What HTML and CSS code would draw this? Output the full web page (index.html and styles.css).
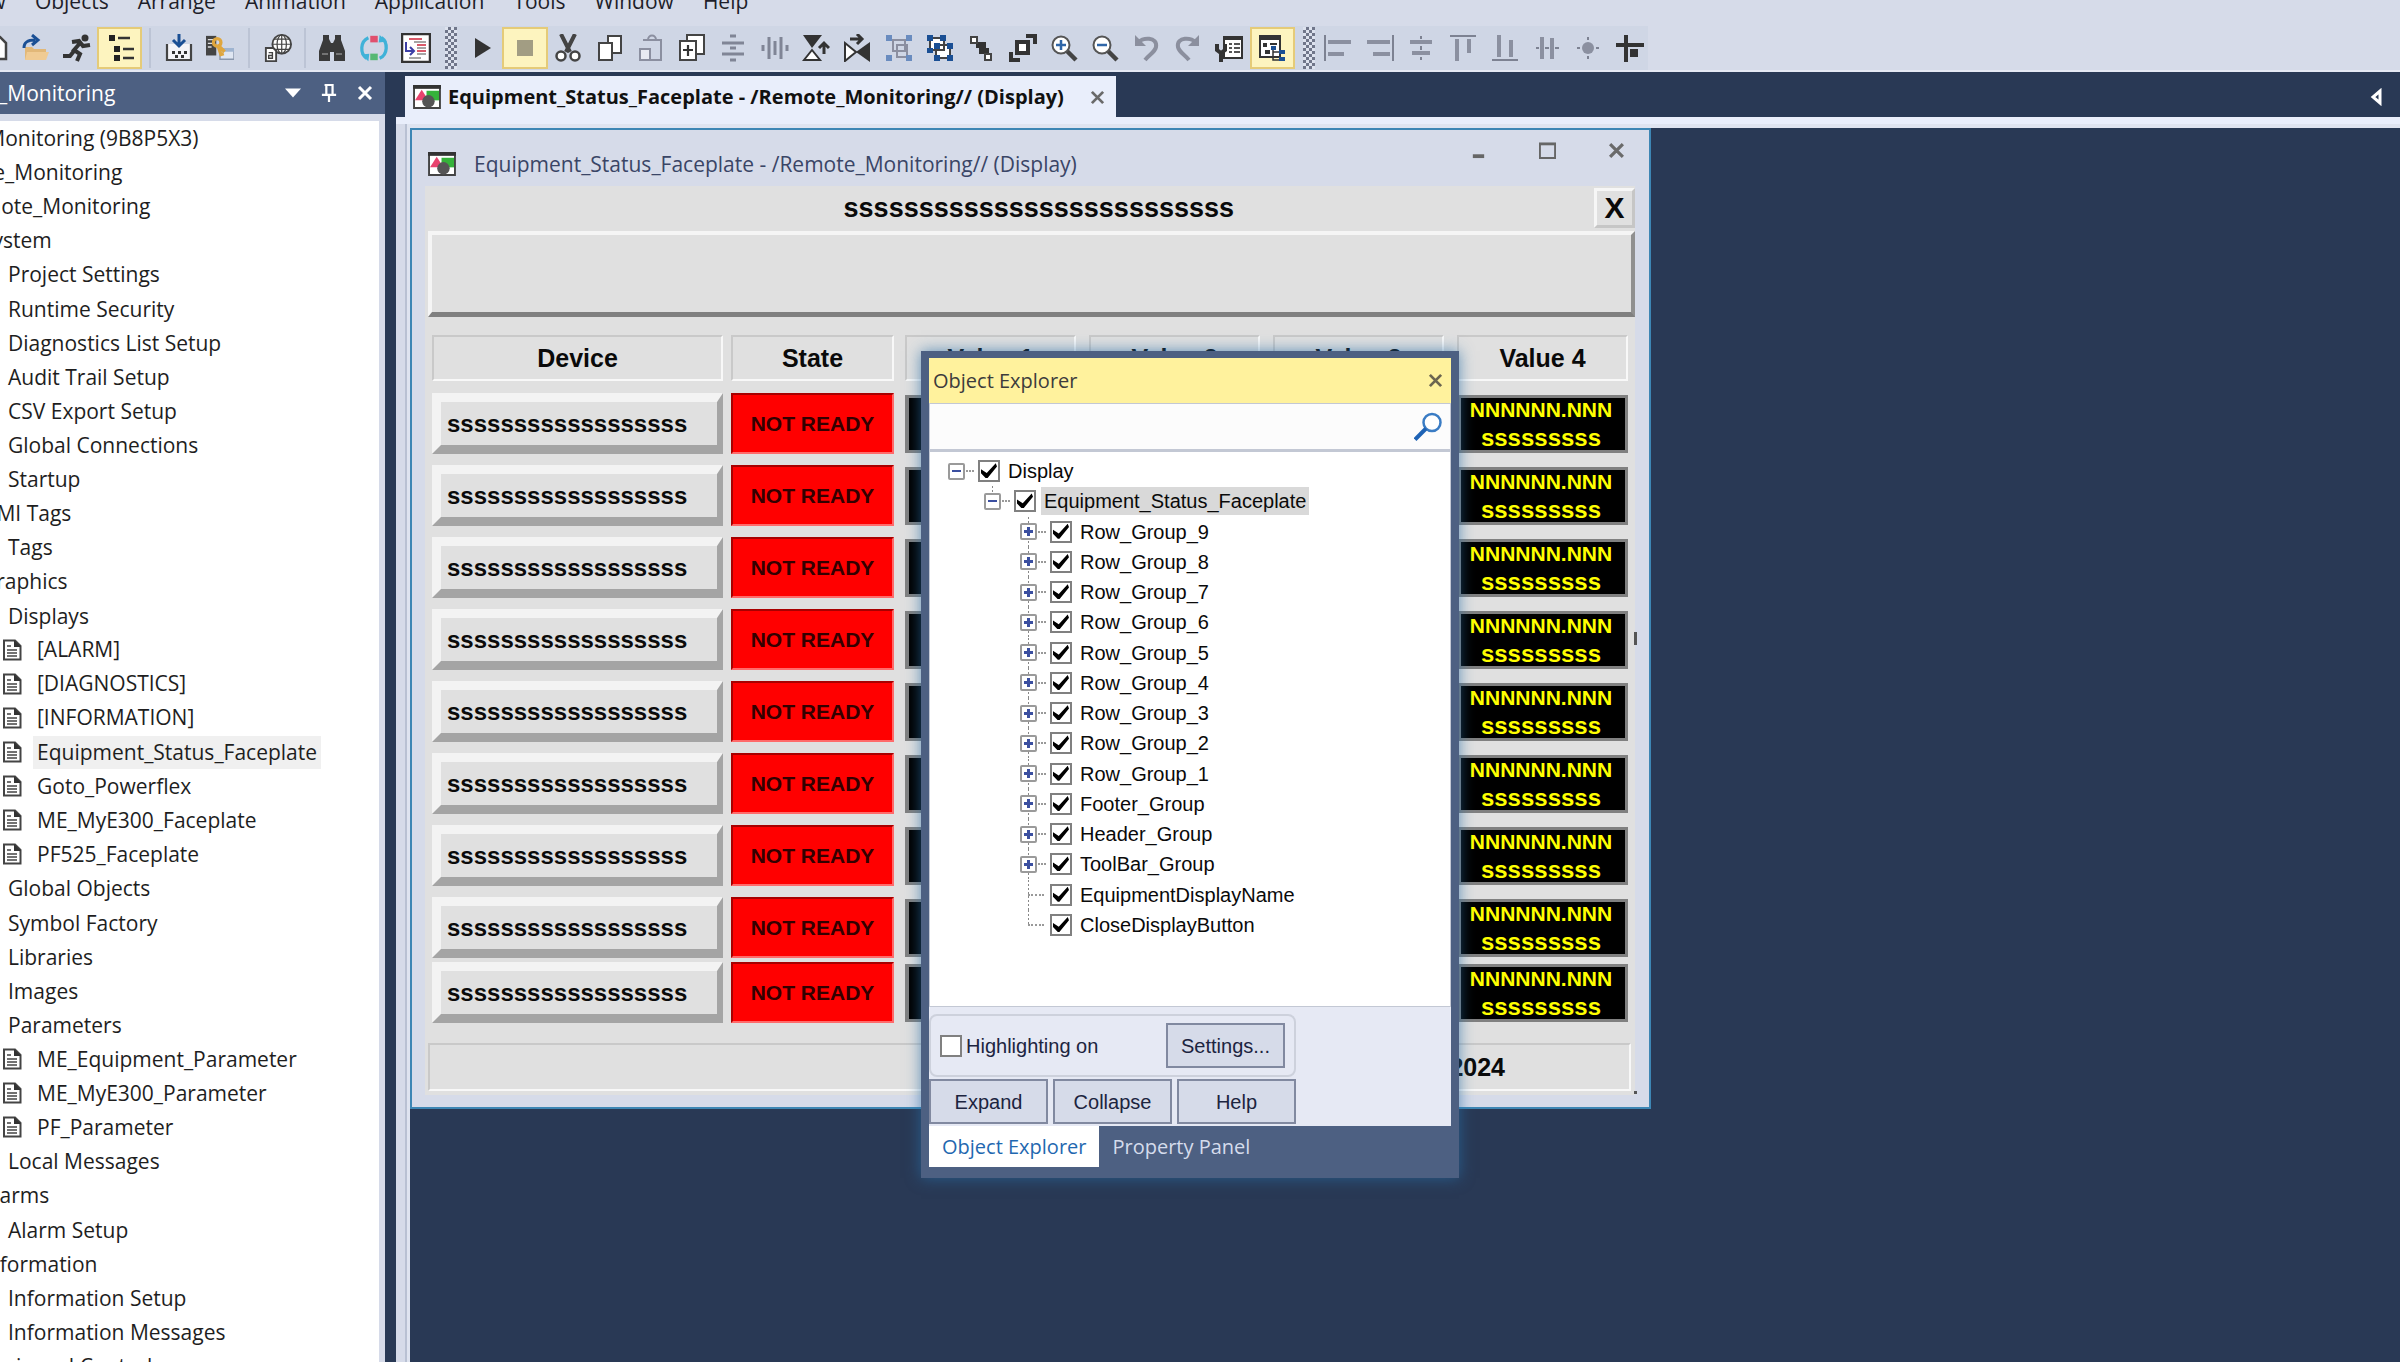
FILE: index.html
```html
<!DOCTYPE html>
<html lang="en">
<head>
<meta charset="utf-8">
<title>Remote_Monitoring</title>
<link rel="stylesheet" href="styles.css">
</head>
<body>
<svg class="defs" aria-hidden="true">
  <symbol id="page" viewBox="0 0 20 22"><path d="M2 1.5h11l5.500 5.500v13.500h-16.500z" fill="#fff" stroke="#444" stroke-width="2"/><path d="M12 1l7 7h-7z" fill="#333"/><path d="M5 7h4M5 11h10M5 14h10M5 17h10" stroke="#444" stroke-width="1.600"/></symbol>
  <symbol id="display" viewBox="0 0 29 25"><path d="M1 1h27v23h-27z" fill="#fff" stroke="#444" stroke-width="2"/><path d="M0 0h29v4h-29z" fill="#333"/><path d="M14 6h13v10h-13z" fill="#35b23a"/><path d="M2 16l7-11 7 11z" fill="#e8436e"/><circle cx="16" cy="17" r="6.500" fill="#555"/></symbol>
  <symbol id="cross" viewBox="0 0 16 16"><path d="M2 2l12 12M14 2L2 14" stroke="currentColor" stroke-width="3" fill="none"/></symbol>
</svg>

<nav class="menu">
  <a href="#">View</a><a href="#">Objects</a><a href="#">Arrange</a><a href="#">Animation</a><a href="#">Application</a><a href="#">Tools</a><a href="#">Window</a><a href="#">Help</a>
</nav>

<div class="toolbar">
  <div class="group g4 lead">
    <button aria-label="New"><svg viewBox="0 0 28 28"><path d="M5 3h14l6 6v16h-20z" fill="#fff" stroke="#444" stroke-width="2.500"/></svg></button>
    <button aria-label="Open"><svg viewBox="0 0 28 28"><path d="M3 13h7l2 2h12v11h-21z" fill="#e2b878"/><path d="M5 18h22l-3 8h-21z" fill="#f0cb93"/><path d="M2 14c0-7 5-8 11-8M10 1l6 5-6 5" fill="none" stroke="#1a4f94" stroke-width="3"/></svg></button>
    <button aria-label="Run application"><svg viewBox="0 0 28 28"><circle cx="22" cy="4" r="3.500" fill="#333"/><path d="M9 8l7-1 4 5 7-1M18 8l-7 8 6 4-3 7M11 17l-4 5H0" fill="none" stroke="#333" stroke-width="4"/></svg></button>
    <button class="on" aria-label="Explorer"><svg viewBox="0 0 28 28"><path d="M3 1h6v6H3zM8 12h6v6H8zM8 21h6v6H8z" fill="#222"/><path d="M12 4h12M17 15h11M17 24h11" stroke="#333" stroke-width="2.500"/></svg></button>
  </div>
  <i class="sep"></i>
  <div class="group g2">
    <button aria-label="Import"><svg viewBox="0 0 28 28"><path d="M2 10v16h24V10" fill="#f4f4f8" stroke="#444" stroke-width="2.200"/><path d="M7 17h3v3H7zM13 17h3v3h-3zM19 17h3v3h-3zM10 21h3v3h-3zM16 21h3v3h-3z" fill="#333"/><path d="M14 0v11M8 6l6 6 6-6" fill="none" stroke="#1a4f94" stroke-width="3"/></svg></button>
    <button aria-label="Database"><svg viewBox="0 0 30 28"><path d="M0 1h11v21H0z" fill="#444"/><path d="M2 5h7M2 9h7M2 13h4" stroke="#ddd" stroke-width="1.500"/><path d="M15 15h15v11H15z" fill="#dfe6f2" stroke="#8a97ad" stroke-width="1.500"/><path d="M15 14h15v4H15z" fill="#9fb4d0"/><circle cx="12" cy="8" r="4" fill="none" stroke="#dfa63e" stroke-width="3.500"/><path d="M13 12l3 9 3-1M14 12l6 6" fill="none" stroke="#dfa63e" stroke-width="3.500"/></svg></button>
  </div>
  <i class="sep"></i>
  <div class="group g1">
    <button aria-label="Language"><svg viewBox="0 0 30 30"><circle cx="19" cy="11" r="10" fill="#fff" stroke="#444" stroke-width="2"/><path d="M9 11h20M19 1v20M11 5.500h16M11 16.500h16" stroke="#444" stroke-width="1.300"/><ellipse cx="19" cy="11" rx="5" ry="10" fill="none" stroke="#444" stroke-width="1.300"/><path d="M2 15h8l3 3v11H2z" fill="#fff" stroke="#444" stroke-width="2"/><path d="M5 20h4v6H5v-3h4" fill="none" stroke="#444" stroke-width="1.500"/></svg></button>
  </div>
  <i class="sep"></i>
  <div class="group g3">
    <button aria-label="Find"><svg viewBox="0 0 28 28"><path d="M5 1h6v4l2 4h2l2-4V1h6v5l4 11v10H16v-9h-4v9H1V17L5 6z" fill="#3a3a3a"/><path d="M4 20h6M18 20h6" stroke="#888" stroke-width="1.500"/></svg></button>
    <button aria-label="Replace"><svg class="wide" viewBox="0 0 32 28"><path d="M10 3C1 7 1 20 8 25M22 25c9-4 9-17 2-22" fill="none" stroke="#3fb2d8" stroke-width="3.500"/><path d="M2 21l9-1-1 8zM30 7l-9 1 1-8z" fill="#3fb2d8"/><path d="M12 1h8v7h-8z" fill="#e0506e"/><path d="M12 20h8v7h-8z" fill="#56b873"/></svg></button>
    <button aria-label="Cross reference"><svg class="wide" viewBox="0 0 30 30"><path d="M1 1h28v28H1z" fill="#fff" stroke="#333" stroke-width="2.500"/><path d="M8 6h13M16 12h9M16 18h9" stroke="#d95a6a" stroke-width="2"/><path d="M13 9h12M16 15h9M16 21h9M8 25h12" stroke="#888" stroke-width="1.500"/><path d="M5 9v9h7M9 14l4 4-4 4" fill="none" stroke="#3c3fa6" stroke-width="2"/></svg></button>
  </div>
  <i class="grip"></i>
  <div class="group g20">
    <button aria-label="Test display"><svg viewBox="0 0 28 28"><path d="M7 4l16 10L7 24z" fill="#333"/></svg></button>
    <button class="on" aria-label="Stop"><svg viewBox="0 0 28 28"><path d="M6 6h16v16H6z" fill="#a29d83"/></svg></button>
    <button aria-label="Cut"><svg viewBox="0 0 28 28"><path d="M7 0l9 18M21 0l-9 18" stroke="#444" stroke-width="4"/><circle cx="7" cy="22" r="4.500" fill="#fff" stroke="#444" stroke-width="2.500"/><circle cx="21" cy="22" r="4.500" fill="#fff" stroke="#444" stroke-width="2.500"/></svg></button>
    <button aria-label="Copy"><svg viewBox="0 0 28 28"><path d="M12 2h13v17H12z" fill="#fff" stroke="#444" stroke-width="2"/><path d="M3 9h13v17H3z" fill="#fff" stroke="#444" stroke-width="2"/></svg></button>
    <button aria-label="Paste"><svg viewBox="0 0 28 28"><path d="M6 6h18v20H13M11 6c0-6 8-6 8 0" fill="none" stroke="#8b8fa0" stroke-width="2"/><path d="M3 15h10v11H3z" fill="#e8eaf2" stroke="#8b8fa0" stroke-width="2"/></svg></button>
    <button aria-label="Duplicate"><svg viewBox="0 0 28 28"><path d="M9 1h17v19H9z" fill="#fff" stroke="#444" stroke-width="2"/><path d="M2 7h16v19H2z" fill="#fff" stroke="#444" stroke-width="2"/><path d="M10 11v11M5 16h10" stroke="#333" stroke-width="2.200"/></svg></button>
    <button aria-label="Space vertically"><svg viewBox="0 0 28 28"><path d="M11 2h6M3 9h22M11 14h6M3 20h22M11 26h6" stroke="#808596" stroke-width="3"/></svg></button>
    <button aria-label="Space horizontally"><svg viewBox="0 0 28 28"><path d="M2 11v6M8 3v22M14 7v14M20 3v22M26 11v6" stroke="#808596" stroke-width="3"/></svg></button>
    <button aria-label="Flip vertical"><svg viewBox="0 0 28 28"><path d="M1 1h19L10 14z" fill="#333"/><path d="M10 16l8 10H2z" fill="#fff" stroke="#333" stroke-width="2"/><path d="M22 20V9M17 14l5-5 5 5" fill="none" stroke="#333" stroke-width="3"/></svg></button>
    <button aria-label="Flip horizontal"><svg viewBox="0 0 28 28"><path d="M2 9l11 9-11 9z" fill="#fff" stroke="#333" stroke-width="2"/><path d="M27 8v20L13 18z" fill="#333"/><path d="M7 5h11M14 0l5 5-5 5" fill="none" stroke="#333" stroke-width="3"/></svg></button>
    <button aria-label="Group"><svg viewBox="0 0 28 28"><path d="M8 6h12v11H8zM12 11h10v12H12z" fill="none" stroke="#8b8fa0" stroke-width="2"/><path d="M1 1h6v6H1zM21 1h6v6h-6zM1 21h6v6H1zM21 21h6v6h-6z" fill="#6a8cbf"/></svg></button>
    <button aria-label="Ungroup"><svg viewBox="0 0 28 28"><path d="M4 4h14v12H4zM10 11h14v13H10z" fill="#fff" stroke="#444" stroke-width="2"/><path d="M1 1h6v6H1zM14 1h6v6h-6zM1 14h6v5H1zM8 9h6v6H8zM21 9h6v6h-6zM8 21h6v6H8zM21 21h6v6h-6z" fill="#1a4f94"/></svg></button>
    <button aria-label="Send to back"><svg viewBox="0 0 28 28"><path d="M9 8h10v6h3v6H12v-6H9z" fill="#333"/><path d="M4 3h6v6H4zM18 20h6v6h-6z" fill="#fff" stroke="#444" stroke-width="2"/></svg></button>
    <button aria-label="Bring to front"><svg viewBox="0 0 28 28"><path d="M17 2h9v8M2 18v8h9" fill="none" stroke="#333" stroke-width="4"/><path d="M8 8h11v11H8z" fill="#fff" stroke="#333" stroke-width="4"/></svg></button>
    <button aria-label="Zoom in"><svg viewBox="0 0 28 28"><path d="M17 17l9 9" stroke="#444" stroke-width="4.500"/><circle cx="11" cy="11" r="8.500" fill="#fff" stroke="#555" stroke-width="2"/><path d="M6 11h10M11 6v10" stroke="#2f66a8" stroke-width="2.500"/></svg></button>
    <button aria-label="Zoom out"><svg viewBox="0 0 28 28"><path d="M17 17l9 9" stroke="#444" stroke-width="4.500"/><circle cx="11" cy="11" r="8.500" fill="#fff" stroke="#555" stroke-width="2"/><path d="M6 11h10" stroke="#2f66a8" stroke-width="2.500"/></svg></button>
    <button aria-label="Undo"><svg viewBox="0 0 28 28"><path d="M5 10c5-8 21-7 19 3-1 5-6 7-11 13" fill="none" stroke="#8b8f9e" stroke-width="4"/><path d="M3 1v11h11z" fill="#8b8f9e"/></svg></button>
    <button aria-label="Redo"><svg viewBox="0 0 28 28"><path d="M23 10C18 2 2 3 4 13c1 5 6 7 11 13" fill="none" stroke="#8b8f9e" stroke-width="4"/><path d="M25 1v11H14z" fill="#8b8f9e"/></svg></button>
    <button aria-label="Properties"><svg viewBox="0 0 28 28"><path d="M9 4h18v20H9z" fill="#fff" stroke="#333" stroke-width="2"/><path d="M8 2h20v4H8z" fill="#333"/><path d="M14 10h3M19 10h6M14 14h3M19 14h6M14 18h3M19 18h6" stroke="#555" stroke-width="2"/><path d="M2 10v6l4 3 4-3v-6M6 18v10" fill="none" stroke="#333" stroke-width="4"/></svg></button>
    <button class="on" aria-label="Object explorer"><svg viewBox="0 0 28 28"><path d="M2 3h20v20H2z" fill="#fff" stroke="#333" stroke-width="2"/><path d="M1 1h22v5H1z" fill="#333"/><path d="M5 9h4v4H5zM7 16h5v4H7zM12 9h7v2h-7z" fill="#333"/><path d="M15 14v12h7M15 18h7" fill="none" stroke="#333" stroke-width="1.500"/><path d="M13 12h5v4h-5zM21 16h6v4h-6zM21 23h6v4h-6z" fill="#1a4f94"/></svg></button>
  </div>
  <i class="grip"></i>
  <div class="group g8">
    <button aria-label="Align left"><svg viewBox="0 0 28 28"><path d="M1 1v26" stroke="#7d8292" stroke-width="2"/><path d="M4 8h23M4 20h16" stroke="#8b90a0" stroke-width="4"/></svg></button>
    <button aria-label="Align right"><svg viewBox="0 0 28 28"><path d="M27 1v26" stroke="#7d8292" stroke-width="2"/><path d="M1 8h23M7 20h17" stroke="#8b90a0" stroke-width="4"/></svg></button>
    <button aria-label="Align center"><svg viewBox="0 0 28 28"><path d="M14 2v3M14 12v4M14 23v3" stroke="#7d8292" stroke-width="2"/><path d="M3 8h22M5 19h18" stroke="#8b90a0" stroke-width="4"/></svg></button>
    <button aria-label="Align top"><svg viewBox="0 0 28 28"><path d="M1 2h26" stroke="#7d8292" stroke-width="2"/><path d="M8 5v22M20 5v14" stroke="#8b90a0" stroke-width="4"/></svg></button>
    <button aria-label="Align bottom"><svg viewBox="0 0 28 28"><path d="M1 26h26" stroke="#7d8292" stroke-width="2"/><path d="M8 1v22M20 6v17" stroke="#8b90a0" stroke-width="4"/></svg></button>
    <button aria-label="Align middle"><svg viewBox="0 0 28 28"><path d="M3 14h3M12 14h4M22 14h4" stroke="#7d8292" stroke-width="2"/><path d="M9 3v22M19 4v21" stroke="#8b90a0" stroke-width="4"/></svg></button>
    <button aria-label="Center points"><svg viewBox="0 0 28 28"><circle cx="14" cy="14" r="6" fill="#8b90a0"/><path d="M14 3v3M14 22v3M3 14h3M22 14h3" stroke="#7d8292" stroke-width="2"/></svg></button>
    <button aria-label="Grid"><svg viewBox="0 0 28 28"><path d="M0 11h28M10 1v27" stroke="#333" stroke-width="4"/><path d="M14 15h8v8h-8z" fill="#333"/></svg></button>
  </div>
</div>

<div class="workspace">
  <aside class="sidebar">
    <header class="side-head">
      <h2>Remote_Monitoring</h2>
      <button aria-label="Menu"><svg viewBox="0 0 18 12"><path d="M0 1h18L9 11z" fill="#fff"/></svg></button>
      <button aria-label="Pin"><svg viewBox="0 0 18 20"><path d="M4 1h9v10M6 1v10M1 12h16M9 12v8" fill="none" stroke="#fff" stroke-width="2.500"/></svg></button>
      <button aria-label="Close"><svg viewBox="0 0 16 16"><use href="#cross"/></svg></button>
    </header>
    <div class="side-body">
      <ul class="project">
        <li class="l0">Remote_Monitoring (9B8P5X3)</li>
        <li class="l1">Remote_Monitoring</li>
        <li class="l2">Remote_Monitoring</li>
        <li class="l3">System</li>
        <li class="l4">Project Settings</li>
        <li class="l4">Runtime Security</li>
        <li class="l4">Diagnostics List Setup</li>
        <li class="l4">Audit Trail Setup</li>
        <li class="l4">CSV Export Setup</li>
        <li class="l4">Global Connections</li>
        <li class="l4">Startup</li>
        <li class="l3">HMI Tags</li>
        <li class="l4">Tags</li>
        <li class="l3">Graphics</li>
        <li class="l4">Displays</li>
        <li class="doc"><svg><use href="#page"/></svg><span>[ALARM]</span></li>
        <li class="doc"><svg><use href="#page"/></svg><span>[DIAGNOSTICS]</span></li>
        <li class="doc"><svg><use href="#page"/></svg><span>[INFORMATION]</span></li>
        <li class="doc"><svg><use href="#page"/></svg><span class="current">Equipment_Status_Faceplate</span></li>
        <li class="doc"><svg><use href="#page"/></svg><span>Goto_Powerflex</span></li>
        <li class="doc"><svg><use href="#page"/></svg><span>ME_MyE300_Faceplate</span></li>
        <li class="doc"><svg><use href="#page"/></svg><span>PF525_Faceplate</span></li>
        <li class="l4">Global Objects</li>
        <li class="l4">Symbol Factory</li>
        <li class="l4">Libraries</li>
        <li class="l4">Images</li>
        <li class="l4">Parameters</li>
        <li class="doc"><svg><use href="#page"/></svg><span>ME_Equipment_Parameter</span></li>
        <li class="doc"><svg><use href="#page"/></svg><span>ME_MyE300_Parameter</span></li>
        <li class="doc"><svg><use href="#page"/></svg><span>PF_Parameter</span></li>
        <li class="l4">Local Messages</li>
        <li class="l3">Alarms</li>
        <li class="l4">Alarm Setup</li>
        <li class="l3">Information</li>
        <li class="l4">Information Setup</li>
        <li class="l4">Information Messages</li>
        <li class="l3">Logic and Control</li>
      </ul>
    </div>
  </aside>

  <main class="docs">
    <div class="tabstrip">
      <div class="tab">
        <svg class="dicon"><use href="#display"/></svg>
        <span>Equipment_Status_Faceplate - /Remote_Monitoring// (Display)</span>
        <button aria-label="Close tab"><svg viewBox="0 0 16 16"><use href="#cross"/></svg></button>
      </div>
      <button class="scroll" aria-label="Scroll tabs"><svg viewBox="0 0 12 18"><path d="M10 3v12L3 9z" fill="#293955" stroke="#fff" stroke-width="3"/></svg></button>
    </div>
    <div class="frame">
      <div class="canvas">
        <section class="window">
          <header class="win-head">
            <svg class="dicon"><use href="#display"/></svg>
            <h1>Equipment_Status_Faceplate - /Remote_Monitoring// (Display)</h1>
            <button aria-label="Minimize"><svg viewBox="0 0 18 18"><path d="M3 15h12" stroke="#666" stroke-width="4"/></svg></button>
            <button aria-label="Maximize"><svg viewBox="0 0 18 18"><path d="M1 2h16v15H1z" fill="none" stroke="#666" stroke-width="2"/><path d="M0 2h18" stroke="#666" stroke-width="3"/></svg></button>
            <button aria-label="Close window"><svg viewBox="0 0 16 16"><use href="#cross"/></svg></button>
          </header>
          <div class="faceplate">
            <div class="title-row">
              <span>ssssssssssssssssssssssssss</span>
              <button class="close-display">X</button>
            </div>
            <div class="raised"></div>
            <table>
              <thead><tr><th>Device</th><th>State</th><th>Value 1</th><th>Value 2</th><th>Value 3</th><th>Value 4</th></tr></thead>
              <tbody>
                <tr><td><button class="device">ssssssssssssssssss</button></td><td class="state">NOT READY</td><td class="val"></td><td class="val"></td><td class="val"></td><td class="val"><b>NNNNNN.NNN</b><span>sssssssss</span></td></tr>
                <tr><td><button class="device">ssssssssssssssssss</button></td><td class="state">NOT READY</td><td class="val"></td><td class="val"></td><td class="val"></td><td class="val"><b>NNNNNN.NNN</b><span>sssssssss</span></td></tr>
                <tr><td><button class="device">ssssssssssssssssss</button></td><td class="state">NOT READY</td><td class="val"></td><td class="val"></td><td class="val"></td><td class="val"><b>NNNNNN.NNN</b><span>sssssssss</span></td></tr>
                <tr><td><button class="device">ssssssssssssssssss</button></td><td class="state">NOT READY</td><td class="val"></td><td class="val"></td><td class="val"></td><td class="val"><b>NNNNNN.NNN</b><span>sssssssss</span></td></tr>
                <tr><td><button class="device">ssssssssssssssssss</button></td><td class="state">NOT READY</td><td class="val"></td><td class="val"></td><td class="val"></td><td class="val"><b>NNNNNN.NNN</b><span>sssssssss</span></td></tr>
                <tr><td><button class="device">ssssssssssssssssss</button></td><td class="state">NOT READY</td><td class="val"></td><td class="val"></td><td class="val"></td><td class="val"><b>NNNNNN.NNN</b><span>sssssssss</span></td></tr>
                <tr><td><button class="device">ssssssssssssssssss</button></td><td class="state">NOT READY</td><td class="val"></td><td class="val"></td><td class="val"></td><td class="val"><b>NNNNNN.NNN</b><span>sssssssss</span></td></tr>
                <tr><td><button class="device">ssssssssssssssssss</button></td><td class="state">NOT READY</td><td class="val"></td><td class="val"></td><td class="val"></td><td class="val"><b>NNNNNN.NNN</b><span>sssssssss</span></td></tr>
                <tr><td><button class="device">ssssssssssssssssss</button></td><td class="state">NOT READY</td><td class="val"></td><td class="val"></td><td class="val"></td><td class="val"><b>NNNNNN.NNN</b><span>sssssssss</span></td></tr>
              </tbody>
            </table>
            <footer class="sunken">2024</footer>
            <i class="handle side"></i><i class="handle corner"></i>
          </div>
        </section>

        <section class="explorer">
          <header class="exp-head"><h2>Object Explorer</h2><button aria-label="Close explorer"><svg viewBox="0 0 16 16"><use href="#cross"/></svg></button></header>
          <div class="search">
            <input type="text" aria-label="Search objects">
            <button aria-label="Search"><svg viewBox="0 0 28 28"><circle cx="18" cy="10" r="8.500" fill="#fff" stroke="#3a7cc4" stroke-width="2.500"/><path d="M12 16L1 27" stroke="#1f63b5" stroke-width="4"/></svg></button>
          </div>
          <ul class="objects">
            <li class="t0"><button class="ex" aria-label="Collapse"></button><input type="checkbox" id="c1" checked><label for="c1">Display</label></li>
            <li class="t1"><button class="ex" aria-label="Collapse"></button><input type="checkbox" id="c2" checked><label for="c2" class="current">Equipment_Status_Faceplate</label></li>
            <li class="t2"><button class="ex plus" aria-label="Expand"></button><input type="checkbox" id="c3" checked><label for="c3">Row_Group_9</label></li>
            <li class="t2"><button class="ex plus" aria-label="Expand"></button><input type="checkbox" id="c4" checked><label for="c4">Row_Group_8</label></li>
            <li class="t2"><button class="ex plus" aria-label="Expand"></button><input type="checkbox" id="c5" checked><label for="c5">Row_Group_7</label></li>
            <li class="t2"><button class="ex plus" aria-label="Expand"></button><input type="checkbox" id="c6" checked><label for="c6">Row_Group_6</label></li>
            <li class="t2"><button class="ex plus" aria-label="Expand"></button><input type="checkbox" id="c7" checked><label for="c7">Row_Group_5</label></li>
            <li class="t2"><button class="ex plus" aria-label="Expand"></button><input type="checkbox" id="c8" checked><label for="c8">Row_Group_4</label></li>
            <li class="t2"><button class="ex plus" aria-label="Expand"></button><input type="checkbox" id="c9" checked><label for="c9">Row_Group_3</label></li>
            <li class="t2"><button class="ex plus" aria-label="Expand"></button><input type="checkbox" id="c10" checked><label for="c10">Row_Group_2</label></li>
            <li class="t2"><button class="ex plus" aria-label="Expand"></button><input type="checkbox" id="c11" checked><label for="c11">Row_Group_1</label></li>
            <li class="t2"><button class="ex plus" aria-label="Expand"></button><input type="checkbox" id="c12" checked><label for="c12">Footer_Group</label></li>
            <li class="t2"><button class="ex plus" aria-label="Expand"></button><input type="checkbox" id="c13" checked><label for="c13">Header_Group</label></li>
            <li class="t2"><button class="ex plus" aria-label="Expand"></button><input type="checkbox" id="c14" checked><label for="c14">ToolBar_Group</label></li>
            <li class="t2 leaf"><input type="checkbox" id="c15" checked><label for="c15">EquipmentDisplayName</label></li>
            <li class="t2 leaf last"><input type="checkbox" id="c16" checked><label for="c16">CloseDisplayButton</label></li>
          </ul>
          <div class="controls">
            <div class="box"><input type="checkbox" id="hl"><label for="hl">Highlighting on</label><button>Settings...</button></div>
            <div class="btns"><button>Expand</button><button>Collapse</button><button>Help</button></div>
          </div>
          <div class="tabs"><button class="active">Object Explorer</button><button>Property Panel</button></div>
        </section>
      </div>
    </div>
  </main>
</div>
</body>
</html>
```
FILE: styles.css
```css
* { box-sizing: border-box; }
html, body { height: 100%; }
body {
  margin: 0;
  display: flex;
  flex-direction: column;
  overflow: hidden;
  background: #d6dbe9;
  color: #1e1e1e;
  font: 21px/28px "Open Sans", "Noto Sans", sans-serif;
  white-space: nowrap;
}
button { margin: 0; padding: 0; border: 0; background: none; color: inherit; font: inherit; }
h1, h2 { margin: 0; font: inherit; }
ul { margin: 0; padding: 0; list-style: none; }
svg { display: block; }
.defs { position: absolute; width: 0; height: 0; }

/* menu and toolbar */
.menu {
  flex: none;
  display: flex;
  align-items: flex-end;
  gap: 29px;
  height: 26px;
  margin-left: -40px;
  padding-bottom: 11px;
  overflow: hidden;
}
.menu a { color: #1e1e2a; text-decoration: none; }
.toolbar {
  flex: none;
  display: flex;
  align-items: center;
  height: 46px;
  border-bottom: 2px solid #e4e8f3;
  background: linear-gradient(90deg, #cfd6e5 1648px, #d6dbe9 1648px);
}
.group { flex: none; display: flex; }
.group button {
  flex: 1;
  display: flex;
  align-items: center;
  justify-content: center;
  height: 42px;
}
.group svg { flex: none; width: 28px; height: 28px; }
.group .wide { width: 30px; height: 30px; }
.group .on { border: 2px solid #e5cb78; background: #fdf4bf; }
.lead { margin-left: -25px; }
.g4 { width: 167px; }
.g2 { width: 83px; }
.g1 { width: 42px; }
.g3 { width: 126px; }
.g20 { width: 834px; }
.g8 { width: 334px; }
.sep { flex: none; width: 2px; height: 40px; margin: 0 7px; background: #bcc4d5; }
.g1 + .sep { margin: 0 5px; }
.grip {
  flex: none;
  width: 12px;
  height: 42px;
  margin: 0 4px 0 8px;
  background: conic-gradient(#70768a 25%, #dde2ee 0 50%, #70768a 0 75%, #dde2ee 0) 0 0 / 6px 6px;
}
.g20 + .grip { margin: 0 2px 0 8px; }

/* workspace */
.workspace { flex: 1; min-height: 0; display: flex; background: #293955; }
.sidebar { flex: none; display: flex; flex-direction: column; width: 385px; overflow: hidden; background: #d6dbe9; }
.side-head {
  flex: none;
  display: flex;
  align-items: center;
  gap: 20px;
  height: 42px;
  margin-bottom: 7px;
  padding-right: 12px;
  background: #4d6082;
  color: #fff;
}
.side-head h2 { flex: 1; margin-left: -78px; }
.side-head svg { width: 16px; height: 18px; }
.side-body { flex: 1; min-height: 0; width: 379px; overflow: hidden; background: #fff; }
.project { display: flex; flex-direction: column; height: 1262px; margin-left: -105px; }
.project li { flex: 1; display: flex; align-items: center; }
.l0 { padding-left: 6px; }
.l1 { padding-left: 34px; }
.l2 { padding-left: 62px; }
.l3 { padding-left: 86px; }
.l4 { padding-left: 113px; }
.doc { padding-left: 107px; }
.doc svg { width: 20px; height: 22px; margin-right: 11px; }
.doc span { padding: 0 4px; line-height: 33px; }
.doc .current { background: #f0f0f0; }

.docs { flex: 1; min-width: 0; display: flex; flex-direction: column; margin-left: 11px; }
.tabstrip {
  flex: none;
  display: flex;
  justify-content: space-between;
  height: 46px;
  padding: 4px 18px 0 9px;
  border-bottom: 1px solid #7f8ba4;
}
.tab { display: flex; align-items: center; height: 42px; padding: 0 11px 0 8px; background: #e9eefb; color: #111; font-size: 20px; font-weight: 700; }
.tab span { margin: 0 26px 0 7px; }
.dicon { flex: none; width: 28px; height: 24px; }
.tab button { color: #6a6a6a; }
.tab button svg { width: 15px; height: 15px; }
.scroll svg { width: 12px; height: 18px; }
.frame {
  flex: 1;
  min-height: 0;
  margin-top: -1px;
  padding: 4px 0 0 14px;
  border-top: 7px solid #e9eefb;
  background: linear-gradient(90deg, #d6dbe9 9px, #b9c1d3 9px 11px, #dfe4f0 11px);
}
.canvas { position: relative; height: 100%; background: #293955; }

/* display window on the canvas */
.window {
  position: absolute;
  left: 0;
  top: 0;
  width: 1241px;
  padding: 0 14px 12px 13px;
  border: 2px solid #3d86b4;
  background: #d6dbe9;
}
.win-head { display: flex; align-items: center; height: 56px; padding: 12px 9px 0 3px; color: #3a4566; }
.win-head h1 { flex: 1; margin-left: 18px; }
.win-head button { width: 18px; height: 18px; margin: 0 0 28px 51px; color: #6a6a6a; }
.win-head button svg { width: 17px; height: 17px; }
.faceplate {
  position: relative;
  padding: 1px 0 4px 3px;
  background: #e0e0e0;
  color: #0a0a0a;
  font-family: "Liberation Sans", Arial, sans-serif;
  font-weight: 700;
}
.title-row { display: flex; justify-content: flex-end; align-items: center; height: 41px; margin-bottom: 3px; font-size: 27px; }
.title-row span { margin-right: 360px; }
.close-display { width: 41px; height: 40px; border: 3px solid #f6f6f6; border-right-color: #c6c6c6; border-bottom-color: #c6c6c6; font-size: 30px; }
.raised { height: 86px; border: 4px solid #f5f5f5; border-bottom: 5px solid #808080; border-right-color: #909090; }
.faceplate table { display: block; margin: 18px 0 20px 4px; }
.faceplate thead, .faceplate tbody { display: block; }
.faceplate tr { display: grid; grid-template-columns: 299px 174px 184px 184px 184px 171px; height: 61px; margin-bottom: 11px; }
.faceplate thead tr { height: 44px; margin-bottom: 14px; }
.faceplate tbody tr:nth-last-child(2) { margin-bottom: 4px; }
.faceplate tbody tr:last-child { margin-bottom: 0; }
.faceplate th { margin-right: 13px; padding: 0; border: 2px solid #c9c9c9; border-right-color: #f8f8f8; border-bottom-color: #f8f8f8; font-size: 25px; line-height: 42px; }
.faceplate th:first-child { margin-right: 8px; }
.faceplate th:nth-child(2) { margin-right: 11px; }
.faceplate th:last-child, .faceplate td:last-child { margin-right: 0; }
.faceplate td { padding: 0; }
.device {
  display: block;
  width: 291px;
  height: 61px;
  padding: 0 18px 0 6px;
  border: 9px solid #f3f3f3;
  border-right: 6px solid #a4a4a4;
  border-bottom-color: #a4a4a4;
  text-align: left;
  font-size: 24px;
}
.faceplate .state {
  margin-right: 11px;
  border: 2px solid #a80000;
  border-right-color: #ff6a6a;
  border-bottom-color: #ff6a6a;
  background: #f00;
  color: #330000;
  font-size: 21px;
  line-height: 57px;
  text-align: center;
}
.faceplate .val {
  display: flex;
  flex-direction: column;
  align-items: center;
  justify-content: center;
  height: 58px;
  margin: 2px 13px 0 0;
  padding-right: 4px;
  border: 3px solid #808080;
  border-left-width: 4px;
  background: #000;
  color: #ff0;
  font-size: 24px;
  line-height: 28px;
}
.val b { font-size: 21px; }
.sunken {
  height: 48px;
  margin-right: 4px;
  padding-right: 124px;
  border: 2px solid #c9c9c9;
  border-right-color: #f8f8f8;
  border-bottom-color: #f8f8f8;
  font-size: 25px;
  line-height: 44px;
  text-align: right;
}
.handle { position: absolute; right: -2px; width: 3px; background: #555; }
.side { top: 446px; height: 13px; }
.corner { bottom: 1px; height: 3px; }

/* floating object explorer */
.explorer {
  position: absolute;
  left: 511px;
  top: 223px;
  width: 538px;
  padding: 7px 8px 11px;
  background: #4d6082;
  box-shadow: 0 0 14px rgba(40, 110, 165, 0.7);
}
.exp-head { display: flex; align-items: center; justify-content: space-between; height: 45px; padding: 0 8px 0 4px; background: #fff29d; color: #3c3c3c; font-size: 20px; }
.exp-head svg { width: 15px; height: 15px; color: #6c6650; }
.search { display: flex; align-items: center; height: 49px; padding: 0 8px 0 2px; border: 1px solid #c3c8d4; border-bottom-width: 3px; background: #fcfcfc; }
.search input { flex: 1; height: 40px; border: 0; outline: 0; background: none; font: inherit; }
.search svg { width: 28px; height: 29px; }
.objects {
  display: flex;
  flex-direction: column;
  height: 555px;
  padding: 4px 0 66px;
  border: 1px solid #c3c8d4;
  border-top: 0;
  background: #fff;
  color: #0a0a0a;
  font: 20px/28px "Liberation Sans", Arial, sans-serif;
}
.objects li { flex: 1; display: flex; align-items: center; }
.t0 { padding-left: 18px; }
.t1 { padding-left: 54px; background: repeating-linear-gradient(#888 0 2px, #fff 2px 4px) 62px 0 / 1px 50% no-repeat; }
.t2 { padding-left: 90px; background: repeating-linear-gradient(#888 0 2px, #fff 2px 4px) 98px 0 / 1px 100% no-repeat; }
.ex {
  width: 17px;
  height: 17px;
  margin-right: 13px;
  border: 2px solid #9a9a9a;
  border-radius: 2px;
  background: linear-gradient(#3b4fa0, #3b4fa0) center / 9px 2px no-repeat, #fff;
}
.plus {
  background: linear-gradient(#3b4fa0, #3b4fa0) center / 9px 3px no-repeat,
    linear-gradient(#3b4fa0, #3b4fa0) center / 3px 9px no-repeat, #fff;
}
.ex::after { content: ""; display: block; width: 8px; margin-left: 16px; border-top: 2px dotted #999; }
.leaf::before { content: ""; width: 16px; margin: 0 6px 0 8px; border-top: 2px dotted #999; }
.last { background-size: 1px 50%; }
input[type="checkbox"] {
  appearance: none;
  display: grid;
  width: 22px;
  height: 22px;
  margin: 0;
  border: 2px solid #808080;
  background: #fff;
}
input[type="checkbox"]:checked::before {
  content: "";
  width: 16px;
  height: 15px;
  margin: 1px;
  background: #000;
  clip-path: polygon(0 40%, 36% 66%, 92% 0, 100% 22%, 40% 100%, 30% 100%, 0 68%);
}
.objects label { margin-left: 5px; padding: 0 3px; }
.objects .current { background: #d9d9d9; }
.controls { padding: 7px 0 2px 0; background: #e6e9f4; color: #1c2440; font: 20px/28px "Liberation Sans", Arial, sans-serif; }
.controls .box { display: flex; align-items: center; width: 367px; height: 63px; margin-bottom: 2px; padding: 0 9px 0 9px; border: 2px solid #cdd1dc; border-radius: 8px; }
.box label { flex: 1; margin-left: 4px; }
.controls button { width: 119px; height: 45px; border: 2px solid #8189a0; background: #d6dbe9; }
.btns { display: flex; gap: 5px; }
.tabs { display: flex; height: 41px; color: #d5dcec; font-size: 20px; }
.tabs button { padding: 0 13px; }
.tabs .active { background: #fff; color: #1f68b0; }
```
